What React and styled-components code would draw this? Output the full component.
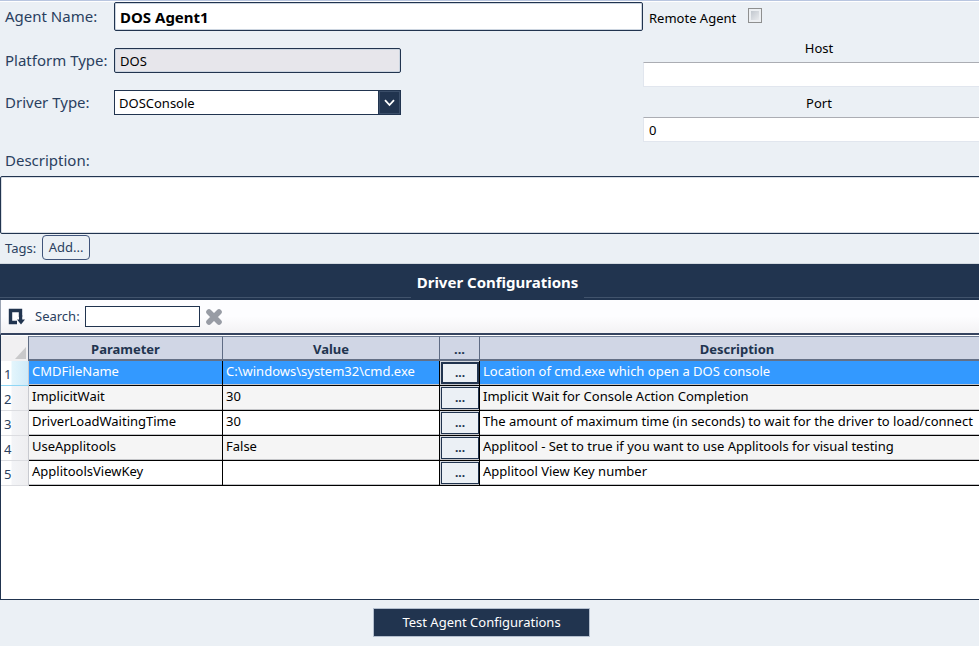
import React, { useState } from "react";
import styled, { createGlobalStyle, css } from "styled-components";

const navy = "#21344f";
const ink = "#2a3f5f";

const GlobalStyle = createGlobalStyle`
  * { box-sizing: border-box; }
  html, body, #root { height: 100%; }
  body {
    margin: 0;
    background: #ebf0f5;
    color: #000;
    font: 13px/20px "Noto Sans", "Segoe UI", sans-serif;
  }
  button, input, select, textarea { font: inherit; color: inherit; margin: 0; }
`;

const Page = styled.main`
  display: flex;
  flex-direction: column;
  min-height: 100vh;
  overflow: hidden;
  border-top: 1px solid #b9c6e0;
`;

const Content = styled.div`
  display: flex;
  flex-direction: column;
  flex: 1;
  margin-right: -16px;
`;

const AgentForm = styled.form`
  display: grid;
  grid-template-columns: 643px 1fr;
  border-top: 1px solid #fff;
`;

const Fields = styled.div`
  display: grid;
  grid-template-columns: 114px 1fr;
  grid-template-rows: 29px 25px 25px;
  row-gap: 17px;
  align-items: center;
`;

const Label = styled.label`
  padding-left: 5px;
  padding-bottom: 2px;
  font-size: 15px;
  color: ${ink};
  white-space: nowrap;
`;

const TextBox = styled.input`
  width: ${(p) => (p.$short ? "287px" : "100%")};
  height: 100%;
  padding: 0 5px;
  border: 1px solid ${navy};
  border-radius: 2px;
  background: ${(p) => (p.readOnly ? "#e7e6eb" : "#fff")};
  box-shadow: inset 0 0 0 1px #ccd5e0;
  ${(p) => p.$strong && css`
    font-size: 15px;
    font-weight: 700;
  `}
`;

const SelectBox = styled.div`
  position: relative;
  width: 287px;
  height: 25px;
`;

const Select = styled.select`
  width: 100%;
  height: 100%;
  padding: 0 28px 0 4px;
  border: 1px solid ${navy};
  border-radius: 0;
  background: #fff;
  appearance: none;
`;

const SelectArrow = styled.span`
  position: absolute;
  inset: 0 0 0 auto;
  display: grid;
  place-items: center;
  width: 23px;
  border: 1px solid ${navy};
  outline: 1px solid #3b4e69;
  outline-offset: -2px;
  background: ${navy};
  pointer-events: none;
`;

const Remote = styled.div`
  display: flex;
  flex-direction: column;
`;

const RemoteToggle = styled.label`
  display: flex;
  gap: 12px;
  height: 36px;
  padding: 6px 0 0 6px;
`;

const CheckBox = styled.input`
  width: 14px;
  height: 15px;
  border: 1px solid #8e8f8f;
  background: linear-gradient(135deg, #b8bfc7, #f2f3f5);
  box-shadow: inset 0 0 0 2px #eceff2;
  appearance: none;
`;

const RemoteField = styled.label`
  display: flex;
  flex-direction: column;
  margin-bottom: 6px;
  text-align: center;
`;

const RemoteInput = styled.input`
  height: 25px;
  margin-top: 4px;
  padding: 0 5px;
  border: 1px solid #e1e6ee;
  border-top-color: #abadb3;
  background: #fff;
`;

const DescriptionBlock = styled.div`
  display: flex;
  flex-direction: column;
  gap: 4px;
  padding-top: 2px;
`;

const DescriptionBox = styled.textarea`
  height: 58px;
  border: 1px solid ${navy};
  border-radius: 2px;
  background: #fff;
  box-shadow: inset 0 0 0 1px #d9dee5;
  resize: none;
`;

const Tags = styled.div`
  display: flex;
  align-items: center;
  gap: 6px;
  height: 30px;
  padding-left: 5px;
  padding-bottom: 2px;
  border-bottom: 1px solid #d3dae0;
  color: ${ink};
`;

const AddButton = styled.button`
  width: 48px;
  height: 25px;
  padding: 0 0 2px;
  border: 1px solid #40547a;
  border-radius: 4px;
  background: transparent;
`;

const Heading = styled.h2`
  display: flex;
  gap: 6px;
  height: 36px;
  margin: 0;
  padding-bottom: 2px;
  background: ${navy};
  color: #fff;
  font-size: 15px;
  line-height: 37px;

  &::before,
  &::after {
    content: "";
    flex: 1;
    border-bottom: 1px solid #41536c;
  }
`;

const Toolbar = styled.div`
  display: flex;
  align-items: center;
  height: 35px;
  padding-left: 7px;
  border-left: 1px solid #9aa3b3;
  border-bottom: 2px solid #35435f;
  background: linear-gradient(#fdfdff 50%, #f3f2f4);
  color: ${ink};
`;

const IconButton = styled.button`
  display: flex;
  padding: 0;
  border: 0;
  background: none;
`;

const SearchField = styled.div`
  display: flex;
  align-items: center;
  gap: 5px;
  margin: 0 5px 0 10px;
`;

const SearchLabel = styled.label`
  padding-bottom: 2px;
`;

const SearchInput = styled.input`
  width: 115px;
  height: 21px;
  padding: 0 4px;
  border: 1px solid ${navy};
  background: #fff;
`;

const GridPanel = styled.section`
  flex: 1;
  padding-top: 1px;
  border-left: 1px solid ${navy};
  border-bottom: 1px solid ${navy};
  background: #fff;
`;

const Table = styled.table`
  width: 100%;
  border-spacing: 0;
  table-layout: fixed;
`;

const Column = styled.col`
  width: ${(p) => p.$width}px;
`;

const HeadCell = styled.th`
  height: 25px;
  padding: 1px 0 0;
  border-top: 1px solid #707e96;
  border-right: 1px solid #5f6c84;
  border-bottom: 2px solid #647086;
  background: #d0d6e5;
  color: ${navy};
  line-height: 20px;
`;

const Corner = styled.td`
  padding: 0 2px 2px 0;
  border-right: 1px solid #5f6c84;
  background: #f1f0f2;
  vertical-align: bottom;
  text-align: right;
  line-height: 0;
`;

const RowNumber = styled.th`
  padding: 1px 0 0 3px;
  border-right: 1px solid #c8cad0;
  border-bottom: 1px solid ${(p) => (p.$selected ? "#8fd6f5" : "#dcdde1")};
  background: ${(p) =>
    p.$selected
      ? "linear-gradient(90deg, #fff 10px, #e3f5fc 11px, #cfeaf8)"
      : "linear-gradient(90deg, #fff 10px, #f3f4f7 11px, #eeeef0)"};
  color: ${ink};
  font-weight: 400;
  line-height: 20px;
  text-align: left;
`;

const Cell = styled.td`
  height: 25px;
  padding: ${(p) => (p.$action ? "1px 0 0 1px" : "0 3px 4px")};
  border-right: 1px solid #000;
  border-bottom: 1px solid #000;
  background: ${(p) => (p.$action ? "#d5d9df" : "none")};
  box-shadow: inset 0 -1px 0 #c4c5c8;
  line-height: 20px;
  white-space: nowrap;
`;

const Row = styled.tr`
  background: ${(p) => (p.$selected ? "#3399ff" : p.$shaded ? "#f5f5f5" : "#fff")};
  color: ${(p) => (p.$selected ? "#fff" : "#000")};
`;

const MoreButton = styled.button`
  display: block;
  width: 100%;
  height: 22px;
  margin-bottom: 1px;
  padding: 0;
  border: ${(p) => (p.$selected ? 2 : 1)}px solid ${navy};
  background: #ebf0f5;
  color: ${navy};
  font-size: 12px;
  font-weight: 700;
  line-height: 18px;
`;

const Footer = styled.footer`
  display: flex;
  justify-content: center;
  padding: 8px 16px 9px 0;
`;

const TestButton = styled.button`
  width: 217px;
  height: 29px;
  padding: 0 0 2px;
  border: 1px solid #b4bfce;
  background: ${navy};
  color: #fff;
`;

const rows = [
  ["CMDFileName", "C:\\windows\\system32\\cmd.exe", "Location of cmd.exe which open a DOS console"],
  ["ImplicitWait", "30", "Implicit Wait for Console Action Completion"],
  ["DriverLoadWaitingTime", "30", "The amount of maximum time (in seconds) to wait for the driver to load/connect"],
  ["UseApplitools", "False", "Applitool - Set to true if you want to use Applitools for visual testing"],
  ["ApplitoolsViewKey", "", "Applitool View Key number"],
];

function ChevronIcon() {
  return (
    <svg width="11" height="8" viewBox="0 0 11 8" fill="none" stroke="#fff" strokeWidth="1.8">
      <path d="M1 1.2 5.5 6 10 1.2" />
    </svg>
  );
}

function ExportIcon() {
  return (
    <svg width="17" height="17" viewBox="0 0 17 17" fill="none">
      <path d="M9 14.5H2.5V2.5h10V9" stroke={navy} strokeWidth="3.4" />
      <path d="M11 7h3.2v4.5H17L13 16.5 9 11.5h2z" fill={navy} />
    </svg>
  );
}

function ClearIcon() {
  return (
    <svg width="18" height="18" viewBox="0 0 18 18" stroke="#989ca5" strokeWidth="5.6" strokeLinecap="round">
      <path d="M4 4l10 10M14 4 4 14" />
    </svg>
  );
}

function CornerIcon() {
  return (
    <svg width="11" height="12" viewBox="0 0 11 12">
      <path d="M11 0v12H0z" fill="#c9c9cb" />
    </svg>
  );
}

export default function App() {
  const [selected, setSelected] = useState(0);
  return (
    <>
      <GlobalStyle />
      <Page>
        <Content>
          <AgentForm>
            <Fields>
              <Label htmlFor="agent">Agent Name:</Label>
              <TextBox id="agent" defaultValue="DOS Agent1" $strong />
              <Label htmlFor="platform">Platform Type:</Label>
              <TextBox id="platform" defaultValue="DOS" readOnly $short />
              <Label htmlFor="driver">Driver Type:</Label>
              <SelectBox>
                <Select id="driver">
                  <option>DOSConsole</option>
                </Select>
                <SelectArrow><ChevronIcon /></SelectArrow>
              </SelectBox>
            </Fields>
            <Remote>
              <RemoteToggle>
                Remote Agent
                <CheckBox type="checkbox" />
              </RemoteToggle>
              <RemoteField>
                Host
                <RemoteInput />
              </RemoteField>
              <RemoteField>
                Port
                <RemoteInput defaultValue="0" />
              </RemoteField>
            </Remote>
          </AgentForm>
          <DescriptionBlock>
            <Label htmlFor="description">Description:</Label>
            <DescriptionBox id="description" />
          </DescriptionBlock>
          <Tags>
            <span>Tags:</span>
            <AddButton type="button">Add...</AddButton>
          </Tags>
          <Heading>Driver Configurations</Heading>
          <Toolbar>
            <IconButton aria-label="Export"><ExportIcon /></IconButton>
            <SearchField>
              <SearchLabel htmlFor="search">Search:</SearchLabel>
              <SearchInput id="search" />
            </SearchField>
            <IconButton aria-label="Clear search"><ClearIcon /></IconButton>
          </Toolbar>
          <GridPanel>
            <Table>
              <colgroup>
                <Column $width={28} />
                <Column $width={194} />
                <Column $width={217} />
                <Column $width={40} />
                <col />
              </colgroup>
              <thead>
                <tr>
                  <Corner><CornerIcon /></Corner>
                  <HeadCell>Parameter</HeadCell>
                  <HeadCell>Value</HeadCell>
                  <HeadCell>...</HeadCell>
                  <HeadCell>Description</HeadCell>
                </tr>
              </thead>
              <tbody>
                {rows.map(([name, value, text], i) => {
                  const on = i === selected;
                  return (
                    <Row key={name} $selected={on} $shaded={i % 2 === 1} onClick={() => setSelected(i)}>
                      <RowNumber scope="row" $selected={on}>{i + 1}</RowNumber>
                      <Cell>{name}</Cell>
                      <Cell>{value}</Cell>
                      <Cell $action>
                        <MoreButton $selected={on} aria-label={`Edit ${name}`}>...</MoreButton>
                      </Cell>
                      <Cell>{text}</Cell>
                    </Row>
                  );
                })}
              </tbody>
            </Table>
          </GridPanel>
        </Content>
        <Footer>
          <TestButton>Test Agent Configurations</TestButton>
        </Footer>
      </Page>
    </>
  );
}
